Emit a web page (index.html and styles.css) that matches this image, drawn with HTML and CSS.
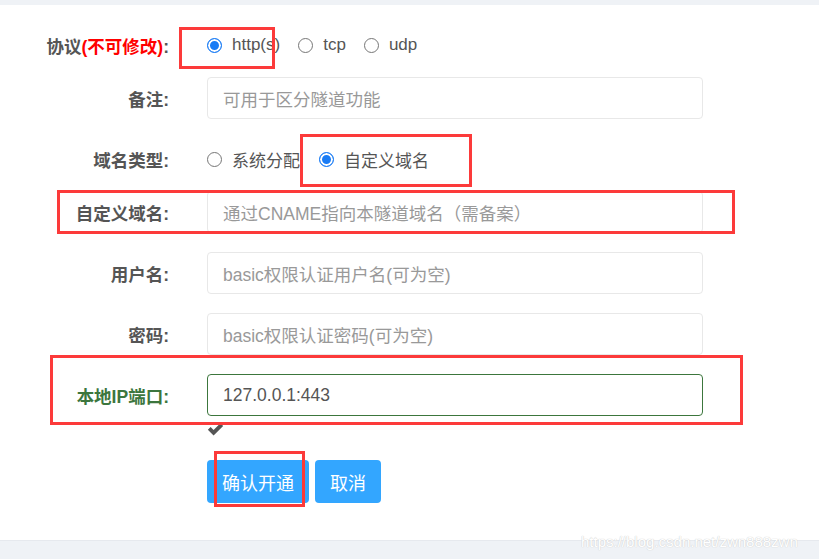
FILE: index.html
```html
<!DOCTYPE html>
<html lang="zh">
<head>
<meta charset="utf-8">
<title>隧道配置</title>
<link rel="stylesheet" href="styles.css">
</head>
<body>
<div class="top-band"></div>
<main class="panel">
  <form class="form">
    <div class="row radio-row">
      <label class="label">协议<span class="warn">(不可修改)</span>:</label>
      <div class="control radios">
        <span class="opt"><span class="radio checked"></span>http(s)</span>
        <span class="opt"><span class="radio"></span>tcp</span>
        <span class="opt"><span class="radio"></span>udp</span>
      </div>
    </div>
    <div class="row">
      <label class="label">备注:</label>
      <div class="control"><div class="input placeholder">可用于区分隧道功能</div></div>
    </div>
    <div class="row radio-row">
      <label class="label">域名类型:</label>
      <div class="control radios">
        <span class="opt opt-wide"><span class="radio"></span>系统分配</span>
        <span class="opt"><span class="radio checked"></span>自定义域名</span>
      </div>
    </div>
    <div class="row">
      <label class="label">自定义域名:</label>
      <div class="control"><div class="input placeholder">通过CNAME指向本隧道域名（需备案）</div></div>
    </div>
    <div class="row">
      <label class="label">用户名:</label>
      <div class="control"><div class="input placeholder">basic权限认证用户名(可为空)</div></div>
    </div>
    <div class="row">
      <label class="label">密码:</label>
      <div class="control"><div class="input placeholder">basic权限认证密码(可为空)</div></div>
    </div>
    <div class="row success">
      <label class="label">本地IP端口:</label>
      <div class="control"><div class="input value">127.0.0.1:443</div></div>
    </div>
    <div class="row feedback-row">
      <div class="label"></div>
      <div class="control">
        <svg class="check" width="17" height="15" viewBox="0 0 16 14"><path d="M0.8 8.2 L3.4 5.6 L6.2 8.4 L12.6 2 L15.2 4.6 L6.2 13.6 Z" fill="#555"/></svg>
      </div>
    </div>
    <div class="row btn-row">
      <div class="label"></div>
      <div class="control buttons">
        <button type="button" class="btn">确认开通</button>
        <button type="button" class="btn">取消</button>
      </div>
    </div>
  </form>
  <div class="mark m1"></div>
  <div class="mark m2"></div>
  <div class="mark m3"></div>
  <div class="mark m4"></div>
  <div class="mark m5"></div>
</main>
<footer class="bottom-band">
  <span class="watermark">https://blog.csdn.net/zwn888zwn</span>
</footer>
</body>
</html>
```
FILE: styles.css
```css
* { box-sizing: border-box; }
html, body { margin: 0; padding: 0; }
body {
  width: 819px;
  height: 559px;
  overflow: hidden;
  background: #fff;
  font-family: "Liberation Sans", "Noto Sans CJK SC", sans-serif;
  color: #555;
  display: flex;
  flex-direction: column;
}
.top-band { height: 5px; background: #eff2f6; flex: none; }
.panel {
  position: relative;
  height: 535px;
  flex: none;
  padding-top: 19px;
  background: #fff;
}
.form { display: flex; flex-direction: column; }
.row {
  display: flex;
  align-items: center;
  height: 42px;
  margin-bottom: 19px;
}
.radio-row { margin-bottom: 11px; }
.label {
  width: 170px;
  flex: none;
  text-align: right;
  font-weight: bold;
  font-size: 17.5px;
  color: #555;
  padding-right: 1px;
}
.warn { color: #f00; }
.control {
  margin-left: 37px;
  width: 496px;
  flex: none;
}
.radios { display: flex; align-items: center; font-size: 17px; color: #555; }
.opt { display: flex; align-items: center; margin-right: 18px; }
.opt-wide { margin-right: 19px; }
.radio {
  width: 15px;
  height: 15px;
  border-radius: 50%;
  border: 1px solid #767676;
  background: #fff;
  margin-left: 0;
  margin-right: 10px;
  flex: none;
}
.radio.checked {
  border: 1.5px solid #1a7cf5;
  background: #1a7cf5;
  box-shadow: inset 0 0 0 2px #fff;
}
.input {
  height: 42px;
  border: 1px solid #e8e8e8;
  border-radius: 4px;
  padding-left: 15px;
  display: flex;
  align-items: center;
  font-size: 17.5px;
}
.placeholder { color: #999; }
.success .label { color: #3c763d; }
.success .input { border-color: #3c763d; color: #555; }
.feedback-row { height: 22px; margin-top: -16px; margin-bottom: 0; align-items: flex-start; }
.check { display: block; margin-top: 2px; }
.btn-row { height: 43px; margin-top: 19px; }
.buttons { display: flex; gap: 6px; }
.btn {
  height: 43px;
  padding: 0 15px;
  border: none;
  border-radius: 4px;
  background: #33a6ff;
  color: #fff;
  font-family: "Liberation Sans", "Noto Sans CJK SC", sans-serif;
  font-size: 18px;
}
.mark {
  position: absolute;
  border: 3px solid #fc3a3a;
}
.m1 { left: 179px; top: 22px; width: 96px; height: 42px; }
.m2 { left: 300px; top: 129px; width: 172px; height: 53px; }
.m3 { left: 57px; top: 185px; width: 678px; height: 44px; }
.m4 { left: 50px; top: 350px; width: 693px; height: 70px; }
.m5 { left: 214px; top: 446px; width: 91px; height: 56px; }
.bottom-band {
  height: 19px;
  flex: none;
  background: #eff2f6;
  border-top: 1px solid #e6e9ee;
  position: relative;
}
.watermark {
  position: absolute;
  left: 581px;
  top: -8px;
  font-size: 15px;
  color: #fff;
  text-shadow: 0 0 1px #ccc, 0 0 1px #d6d6d6;
  white-space: nowrap;
}
```
